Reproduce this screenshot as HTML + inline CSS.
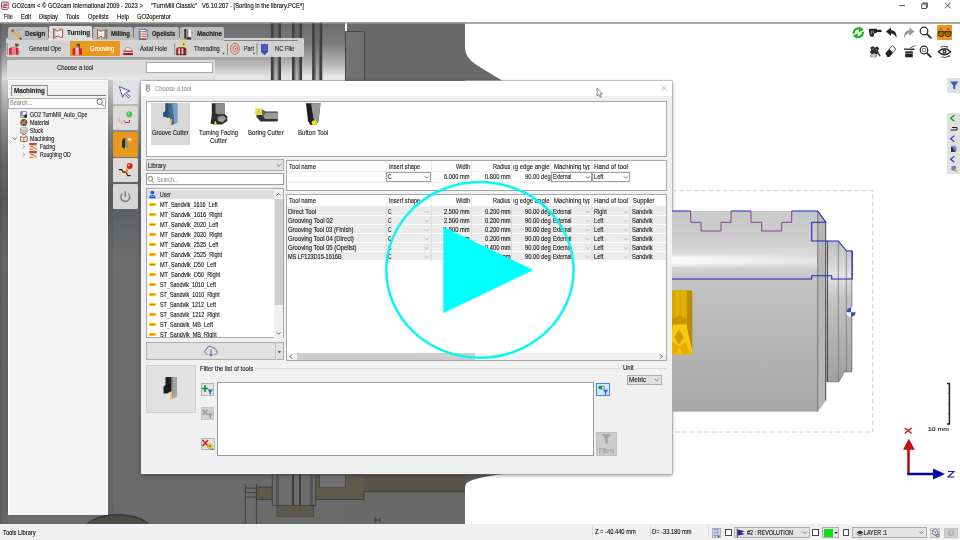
<!DOCTYPE html>
<html><head><meta charset="utf-8">
<style>
*{box-sizing:border-box;margin:0;padding:0}
html,body{width:960px;height:540px;overflow:hidden;background:#fff}
body{font-family:"Liberation Sans",sans-serif;font-size:6.5px;color:#1e1e1e;position:relative}
.a{position:absolute}
.t{position:absolute;white-space:nowrap;transform-origin:0 50%;display:block;-webkit-text-stroke:.13px currentColor}
svg{position:absolute;overflow:visible}
</style></head><body><div id="root" style="position:absolute;left:0;top:0;width:960px;height:540px;will-change:transform">
<!-- sec_bg -->
<div class="a" style="left:0.00px;top:0.00px;width:960.00px;height:22.00px;background:#fff;"></div>
<div class="a" style="left:0.00px;top:22.00px;width:960.00px;height:1.60px;background:#a8a8a8;"></div>
<svg style="left:0;top:0" width="960" height="540" viewBox="0 0 960 540">
<defs>
<linearGradient id="gTop" x1="0" y1="0" x2="0" y2="1"><stop offset="0" stop-color="#6a6a6a"/><stop offset="0.35" stop-color="#7c7c7c"/><stop offset="0.7" stop-color="#b4b4b4"/><stop offset="1" stop-color="#f2f2f2"/></linearGradient>
<linearGradient id="gStripe" x1="0" y1="0" x2="1" y2="0"><stop offset="0" stop-color="#3e3e3e"/><stop offset="0.3" stop-color="#5a5a5a"/><stop offset="0.55" stop-color="#7a7a7a"/><stop offset="0.8" stop-color="#555"/><stop offset="1" stop-color="#3a3a3a"/></linearGradient>
<linearGradient id="gLeft" x1="0" y1="0" x2="0" y2="1"><stop offset="0" stop-color="#e8e8e8"/><stop offset="0.034" stop-color="#cdcdcd"/><stop offset="0.08" stop-color="#a6a6a6"/><stop offset="0.124" stop-color="#888"/><stop offset="0.18" stop-color="#6e6e6e"/><stop offset="0.27" stop-color="#5c5e62"/><stop offset="0.31" stop-color="#606266"/><stop offset="0.4" stop-color="#6d6d6d"/><stop offset="1" stop-color="#6b6b6b"/></linearGradient>
</defs>
<!-- dark solid block top -->
<path d="M345 23.500H465V48Q465.500 58 476.500 65L502 80.500H345Z" fill="#6a6a6a"/>
<!-- gradient zone top-left -->
<rect x="0" y="23.500" width="345" height="57" fill="url(#gTop)"/>
<rect x="0" y="23.500" width="1.600" height="57" fill="#505050" opacity=".5"/><rect x="1.600" y="23.500" width="6" height="57" fill="#505050" opacity=".1"/>
<!-- vertical stripes -->
<rect x="270.9" y="23.5" width="10.1" height="57" fill="#555" opacity=".35"/><rect x="270.9" y="23.5" width="2.5" height="57" fill="#3e3e3e"/><rect x="278.5" y="23.5" width="2.5" height="57" fill="#3e3e3e"/><rect x="273.4" y="23.5" width=".8" height="57" fill="#5a5a5a"/><rect x="277.7" y="23.5" width=".8" height="57" fill="#5a5a5a"/>
<rect x="292.0" y="23.5" width="10.0" height="57" fill="#555" opacity=".35"/><rect x="292.0" y="23.5" width="2.5" height="57" fill="#3e3e3e"/><rect x="299.5" y="23.5" width="2.5" height="57" fill="#3e3e3e"/><rect x="294.5" y="23.5" width=".8" height="57" fill="#5a5a5a"/><rect x="298.7" y="23.5" width=".8" height="57" fill="#5a5a5a"/>
<rect x="312.2" y="23.5" width="10.0" height="57" fill="#555" opacity=".35"/><rect x="312.2" y="23.5" width="2.5" height="57" fill="#3e3e3e"/><rect x="319.7" y="23.5" width="2.5" height="57" fill="#3e3e3e"/><rect x="314.7" y="23.5" width=".8" height="57" fill="#5a5a5a"/><rect x="318.9" y="23.5" width=".8" height="57" fill="#5a5a5a"/>
<rect x="345" y="23.500" width="2" height="8" fill="#fff"/>
<rect x="345.300" y="31.700" width="19" height="49" fill="#727272" stroke="#2a2a2a" stroke-width=".6"/>
<!-- lower-left dark zone -->
<rect x="0" y="80" width="345" height="444" fill="url(#gLeft)"/>
<rect x="0" y="80" width="1.600" height="444" fill="#404040" opacity=".4"/><rect x="1.600" y="80" width="6" height="444" fill="#404040" opacity=".14"/>
<rect x="107.500" y="80" width="5.500" height="444" fill="#404040" opacity=".18"/>
<rect x="345" y="80" width="120" height="444" fill="#6a6a6a"/>
<!-- bottom machine bits (y 474..524) -->
<path d="M465 474H502Q478 477 468 482Q465 484 465 487Z" fill="#5a5a5a"/>
<rect x="364" y="474" width="101" height="17.700" fill="#59554a"/>
<rect x="315.800" y="474" width="48.200" height="25.600" fill="#5d594b"/>
<rect x="319.700" y="474" width="25.700" height="13.700" fill="#727272" stroke="#333" stroke-width=".5"/>
<rect x="256.400" y="487" width="20" height="12.600" fill="#5d594b"/>
<rect x="272.200" y="474" width="43.600" height="31.500" fill="#6c6c6c" stroke="#2a2a2a" stroke-width=".6"/>
<rect x="276" y="474" width="3" height="31.500" fill="#555"/><rect x="292" y="474" width="2" height="31.500" fill="#3c3c3c"/><rect x="299" y="474" width="2" height="31.500" fill="#3c3c3c"/><rect x="310" y="474" width="3" height="31.500" fill="#555"/>
<rect x="277" y="505.500" width="36.800" height="10.700" fill="#5d594b" stroke="#333" stroke-width=".5"/>
<path d="M245.300 483.800V524M256.400 483.800V524M245.300 488H256.400M245.300 492.500H256.400M245.300 497H256.400" stroke="#222" stroke-width=".6" fill="none"/>
<path d="M256.400 487H272.200M256.400 499.600H272.200M315.800 499.600H364V491.700H465" stroke="#2a2a2a" stroke-width=".6" fill="none"/>
<path d="M375 517V523M380 517V523M375 520H380" stroke="#222" stroke-width=".6" fill="none"/>
<ellipse cx="118" cy="531" rx="34" ry="16.300" fill="#4c4c42" stroke="#1a1a1a" stroke-width=".8"/>
</svg>
<!-- sec_top -->
<svg style="left:0;top:0" width="12" height="11" viewBox="0 0 12 11">
<rect x="1.600" y="2" width="6.600" height="7.400" rx="1" fill="#f6e8ee" stroke="#b0385a" stroke-width="1"/>
<path d="M3.200 4.200H6.600V5.700H3.300V7.500H6.700" fill="none" stroke="#8a2848" stroke-width=".9"/></svg>
<span class="t" style="left:11.70px;top:1.87px;font-size:6.50px;line-height:7.80px;color:#111;transform:scaleX(0.8977);">GO2cam &lt; © GO2cam International 2009 - 2023 &gt;</span>
<span class="t" style="left:150.70px;top:1.87px;font-size:6.50px;line-height:7.80px;color:#111;transform:scaleX(0.9156);">"TurnMill Classic"</span>
<span class="t" style="left:201.70px;top:1.87px;font-size:6.50px;line-height:7.80px;color:#111;transform:scaleX(0.8926);">V6.10.207 - [Sorting in the library.PCE*]</span>
<svg style="left:890px;top:0" width="70" height="11" viewBox="890 0 70 11">
<path d="M899.300 5.600H905" stroke="#222" stroke-width=".8"/>
<rect x="921.800" y="4" width="4.400" height="4.400" fill="none" stroke="#222" stroke-width=".8"/><path d="M923 4V2.900H927.400V7.300H926.300" fill="none" stroke="#222" stroke-width=".8"/>
<path d="M945 2.800L950.600 8.400M950.600 2.800L945 8.400" stroke="#222" stroke-width=".8"/></svg>
<span class="t" style="left:3.70px;top:12.87px;font-size:6.50px;line-height:7.80px;color:#111;transform:scaleX(0.8402);">File</span>
<span class="t" style="left:20.80px;top:12.87px;font-size:6.50px;line-height:7.80px;color:#111;transform:scaleX(0.8928);">Edit</span>
<span class="t" style="left:38.80px;top:12.87px;font-size:6.50px;line-height:7.80px;color:#111;transform:scaleX(0.8915);">Display</span>
<span class="t" style="left:66.20px;top:12.87px;font-size:6.50px;line-height:7.80px;color:#111;transform:scaleX(0.8567);">Tools</span>
<span class="t" style="left:87.80px;top:12.87px;font-size:6.50px;line-height:7.80px;color:#111;transform:scaleX(0.8731);">Opelists</span>
<span class="t" style="left:116.70px;top:12.87px;font-size:6.50px;line-height:7.80px;color:#111;transform:scaleX(0.9051);">Help</span>
<span class="t" style="left:137.00px;top:12.87px;font-size:6.50px;line-height:7.80px;color:#111;transform:scaleX(0.8909);">GO2operator</span>
<div class="a" style="left:6.00px;top:38.20px;width:298.30px;height:18.50px;background:rgba(216,216,216,.94);border-radius:1.5px 2px 2px 2px;"></div>
<div class="a" style="left:224.00px;top:39.90px;width:74.30px;height:0.80px;background:#808080;"></div>
<div class="a" style="left:8.00px;top:27.30px;width:40.00px;height:13.20px;background:#bcbcbc;border-radius:2px 2px 0 0;"></div>
<span class="t" style="left:25.00px;top:30.25px;font-size:6.70px;line-height:8.04px;color:#1a1a1a;font-weight:bold;transform:scaleX(0.9088);">Design</span>
<div class="a" style="left:49.00px;top:26.30px;width:43.30px;height:14.70px;background:#dedede;border-radius:2px 2px 0 0;box-shadow:0 0 .5px #fff inset;"></div>
<span class="t" style="left:66.70px;top:29.45px;font-size:6.70px;line-height:8.04px;color:#1a1a1a;font-weight:bold;transform:scaleX(0.9535);">Turning</span>
<div class="a" style="left:93.00px;top:27.30px;width:40.00px;height:13.20px;background:#bcbcbc;border-radius:2px 2px 0 0;"></div>
<span class="t" style="left:111.20px;top:30.25px;font-size:6.70px;line-height:8.04px;color:#1a1a1a;font-weight:bold;transform:scaleX(0.8863);">Milling</span>
<div class="a" style="left:134.00px;top:27.30px;width:45.00px;height:13.20px;background:#bcbcbc;border-radius:2px 2px 0 0;"></div>
<span class="t" style="left:151.70px;top:30.25px;font-size:6.70px;line-height:8.04px;color:#1a1a1a;font-weight:bold;transform:scaleX(0.8813);">Opelists</span>
<div class="a" style="left:180.00px;top:27.30px;width:43.50px;height:13.20px;background:#bcbcbc;border-radius:2px 2px 0 0;"></div>
<span class="t" style="left:196.70px;top:30.25px;font-size:6.70px;line-height:8.04px;color:#1a1a1a;font-weight:bold;transform:scaleX(0.9326);">Machine</span>
<svg style="left:0;top:24px" width="230" height="18" viewBox="0 24 230 18">
<path d="M12.500 30.500L20.500 38.500" stroke="#e8b030" stroke-width="2.400"/><path d="M12 30L13.500 31.500" stroke="#d04040" stroke-width="2.600"/><path d="M19.800 37.800L21.500 39.500" stroke="#333" stroke-width="1.200"/><path d="M16 31L21 29.500" stroke="#c09080" stroke-width=".8"/>
<path d="M53.600 28.600L57.300 31.300L60 29.800H62.600V37.200H60L57.300 35.800L53.600 38.800Z" fill="#f6efe6" stroke="#8a4a32" stroke-width=".9" stroke-linejoin="round"/><path d="M54.800 29.500V37.800" stroke="#8a4a32" stroke-width=".6"/><path d="M59 28.600L61.500 27.800L62.500 29.200" stroke="#d8c860" stroke-width="1" fill="none"/>
<path d="M97.600 29.200L101 31.500L103.600 30H105V38H103.600L101 36.200L97.600 38.800Z" fill="#f6efe6" stroke="#8a4a32" stroke-width=".9" stroke-linejoin="round"/><path d="M106.300 29V39" stroke="#555" stroke-width="1.300" stroke-dasharray="1.400 .8"/><path d="M107.600 30V38" stroke="#888" stroke-width=".6"/>
<rect x="139.300" y="29.300" width="7.800" height="10.200" rx=".8" fill="#fbfbff" stroke="#3a3aa0" stroke-width=".8"/><path d="M141.800 31.800H146M141.800 34H146M141.800 36.200H146M141.800 38.300H146" stroke="#e03818" stroke-width="1.100"/><path d="M140.700 31.200V39" stroke="#181830" stroke-width="1" stroke-dasharray="1.100 1.100"/><path d="M145 29.300L147.100 31.500" stroke="#3a3aa0" stroke-width=".8"/>
<rect x="184.200" y="29" width="2.200" height="10" fill="#383838"/><rect x="186.400" y="29.500" width="2.100" height="9.500" fill="#8c8c8c"/><rect x="188.600" y="29.500" width="2.500" height="7.800" fill="#f4f4f4"/><rect x="191.100" y="31.500" width="1.800" height="2.800" fill="#a0a0a0"/><rect x="186.400" y="37.300" width="4.700" height="2.200" fill="#2a2a2a"/><rect x="183.700" y="38.400" width="2.700" height="1.800" fill="#e8a020"/>
</svg>
<div class="a" style="left:69.70px;top:41.20px;width:50.30px;height:15.30px;background:#e8981c;"></div>
<span class="t" style="left:28.70px;top:44.97px;font-size:6.50px;line-height:7.80px;color:#222;transform:scaleX(0.8625);">General Ope</span>
<span class="t" style="left:90.00px;top:45.27px;font-size:6.50px;line-height:7.80px;color:#fff;transform:scaleX(0.9175);">Grooving</span>
<span class="t" style="left:140.00px;top:44.97px;font-size:6.50px;line-height:7.80px;color:#222;transform:scaleX(0.9329);">Axial Hole</span>
<span class="t" style="left:194.20px;top:44.97px;font-size:6.50px;line-height:7.80px;color:#222;transform:scaleX(0.8814);">Threading</span>
<span class="t" style="left:243.80px;top:44.97px;font-size:6.50px;line-height:7.80px;color:#222;transform:scaleX(0.8304);">Part</span>
<span class="t" style="left:275.00px;top:44.97px;font-size:6.50px;line-height:7.80px;color:#222;transform:scaleX(0.8861);">NC File</span>
<svg style="left:0;top:40px" width="310" height="18" viewBox="0 40 310 18">
<path d="M7.300 43V55M174.700 43.500V55M227.500 43.500V55M257 43.500V55" stroke="#666" stroke-width=".7"/>
<path d="M222 52.800H225L223.500 54.500ZM252.500 52.800H255.500L254 54.500Z" fill="#555"/>
<!-- general ope -->
<path d="M9 48.500L11.500 47H16L18.500 48.500V54.800H9Z" fill="#d42030"/><rect x="11.600" y="47" width="4.400" height="7.800" fill="#f08088"/><rect x="15.300" y="43.300" width="3" height="3.200" fill="#444"/><rect x="16.300" y="43" width="1.600" height="1.200" fill="#e8b020"/>
<!-- grooving -->
<path d="M72.500 49L75 47.500H79.500L82 49V54.800H72.500Z" fill="#d42030"/><rect x="75.500" y="47.500" width="3.200" height="7.300" fill="#f6d0d0"/><rect x="76.500" y="43.800" width="3.500" height="2.600" fill="#555"/><rect x="78.800" y="45" width="1" height="3.500" fill="#444"/>
<!-- axial hole -->
<path d="M123.300 50.800H133V54.800H123.300Z" fill="#c81828"/><path d="M123.300 52.300H133" stroke="#fbeaea" stroke-width="1"/><path d="M123.300 54.600H133" stroke="#4a1010" stroke-width=".7"/><path d="M124.300 50.800L126.500 47.300L130 48.300L132 50.800Z" fill="#f8f0ec" stroke="#7a4040" stroke-width=".5"/>
<!-- threading -->
<path d="M176.300 48.500L178.300 47.300H184.300L186.300 48.500V54.800H176.300Z" fill="#8a1c22"/><rect x="178.300" y="48.300" width="1.700" height="6.300" fill="#f6e0e0"/><rect x="181.500" y="48.300" width="1.800" height="6.300" fill="#f0c4c4"/><path d="M176.300 54.700H186.300" stroke="#2a0808" stroke-width=".7"/><ellipse cx="183" cy="44.300" rx="2.500" ry="1.900" fill="#e4e428"/><circle cx="183.800" cy="44.300" r=".7" fill="#222"/>
<!-- part -->
<ellipse cx="235" cy="48.800" rx="4.400" ry="5.600" fill="#e8c8b8" stroke="#a06040" stroke-width=".8"/><ellipse cx="235.300" cy="48.800" rx="2.300" ry="3.200" fill="none" stroke="#a06040" stroke-width=".7"/><circle cx="235.500" cy="48.800" r=".8" fill="#a06040"/>
<!-- nc file -->
<path d="M261 43.500L262.800 44.500L264.500 43.500L266.200 44.500L268 43.500V52L264.500 55L261 52Z" fill="#3c50b8"/><path d="M262.500 47H266.500M262.500 49.500H266.500" stroke="#a8b4ee" stroke-width=".7" stroke-dasharray=".8 .6"/>
</svg>
<div class="a" style="left:7.00px;top:60.00px;width:208.00px;height:20.00px;background:linear-gradient(#dcdcdc,#dedede 60%,#e9e9e9);border-radius:1.500px 1.500px 0 0;"></div>
<span class="t" style="left:56.70px;top:63.97px;font-size:6.50px;line-height:7.80px;color:#222;transform:scaleX(0.9050);">Choose a tool</span>
<div class="a" style="left:146.00px;top:62.30px;width:67.30px;height:10.30px;background:#fff;border:0.8px solid #a8a8a8;"></div>
<!-- sec_left -->
<div class="a" style="left:7.50px;top:79.70px;width:100.00px;height:435.60px;background:#f1f1f1;border:1px solid #fdfdfd;box-shadow:0 0 1px rgba(0,0,0,.35);"></div>
<div class="a" style="left:47.50px;top:95.30px;width:58.80px;height:0.90px;background:#7a7a7a;"></div>
<div class="a" style="left:11.30px;top:85.30px;width:36.70px;height:10.90px;background:#e9e9e9;border:0.8px solid #8a8a8a;border-bottom:none;border-radius:1.500px 1.500px 0 0;"></div>
<span class="t" style="left:14.20px;top:86.65px;font-size:6.70px;line-height:8.04px;color:#1a1a1a;font-weight:bold;transform:scaleX(0.9297);">Machining</span>
<div class="a" style="left:8.30px;top:97.50px;width:98.00px;height:11.00px;background:#fff;border:0.8px solid #adadad;"></div>
<span class="t" style="left:9.70px;top:99.29px;font-size:6.30px;line-height:7.56px;color:#8e8e8e;transform:scaleX(0.8845);">Search...</span>
<svg style="left:94px;top:97px" width="13" height="12" viewBox="94 97 13 12"><circle cx="99.700" cy="101.800" r="2.700" fill="none" stroke="#555" stroke-width=".8"/><path d="M101.700 103.900L104.300 106.600" stroke="#555" stroke-width=".9"/></svg>
<div class="a" style="left:8.50px;top:109.00px;width:98.00px;height:405.50px;background:#f3f3f3;"></div>
<span class="t" style="left:30.00px;top:110.63px;font-size:6.40px;line-height:7.68px;color:#1a1a1a;transform:scaleX(0.8205);">GO2 TurnMill_Auto_Ope</span>
<span class="t" style="left:30.00px;top:118.63px;font-size:6.40px;line-height:7.68px;color:#1a1a1a;transform:scaleX(0.8435);">Material</span>
<span class="t" style="left:30.00px;top:126.53px;font-size:6.40px;line-height:7.68px;color:#1a1a1a;transform:scaleX(0.8122);">Stock</span>
<span class="t" style="left:30.00px;top:134.53px;font-size:6.40px;line-height:7.68px;color:#1a1a1a;transform:scaleX(0.8295);">Machining</span>
<span class="t" style="left:40.00px;top:142.53px;font-size:6.40px;line-height:7.68px;color:#1a1a1a;transform:scaleX(0.7808);">Facing</span>
<span class="t" style="left:40.00px;top:150.63px;font-size:6.40px;line-height:7.68px;color:#1a1a1a;transform:scaleX(0.7942);">Roughing OD</span>
<svg style="left:8px;top:109px" width="40" height="52" viewBox="8 109 40 52">
<rect x="20.300" y="111.300" width="6.500" height="6.500" rx=".8" fill="#6a78c8"/><rect x="22.500" y="112" width="3.500" height="3" fill="#f0f0f0"/><rect x="21" y="115.500" width="2.500" height="2" fill="#e8d040"/><rect x="24.500" y="114.500" width="2.300" height="3.300" fill="#222"/>
<circle cx="23.800" cy="122.600" r="3.500" fill="#555"/><path d="M21 121.500L26.500 124M21.500 124.500L25.500 120.500" stroke="#f08020" stroke-width="1.300"/>
<rect x="20.300" y="127.500" width="7" height="6.300" rx="2" fill="#bdbdbd" stroke="#8a8a8a" stroke-width=".6"/><ellipse cx="23.800" cy="128.800" rx="3" ry="1.200" fill="#d8d8d8"/>
<path d="M12.600 137.500L14.700 139.600L16.800 137.500" fill="none" stroke="#444" stroke-width=".8"/>
<path d="M20.500 136.500L23.800 137.500L27.200 136.500V141L23.800 142L20.500 141Z" fill="#f2ead8" stroke="#6a4020" stroke-width=".7"/><path d="M23.800 137.500V142" stroke="#6a4020" stroke-width=".6"/><path d="M22.500 135.500L24 134.200L25.500 135.500" stroke="#c03020" stroke-width=".8" fill="none"/>
<path d="M22.700 144.700L24.700 146.500L22.700 148.300" fill="none" stroke="#777" stroke-width=".7"/>
<path d="M22.700 152.800L24.700 154.600L22.700 156.400" fill="none" stroke="#777" stroke-width=".7"/>
<rect x="29.300" y="143" width="7.400" height="7" fill="#f4e8d8"/><rect x="29.300" y="143" width="7.400" height="2.200" fill="#e03028"/><path d="M30.500 146.500H33L35.500 149H36.500" stroke="#803018" stroke-width=".8" fill="none"/><rect x="29.300" y="148.500" width="4" height="1.500" fill="#e8a020"/>
<rect x="29.300" y="151" width="7.400" height="7" fill="#f4e8d8"/><rect x="29.300" y="151" width="7.400" height="2.200" fill="#e03028"/><path d="M30.500 154.500H33L35.500 157H36.500" stroke="#803018" stroke-width=".8" fill="none"/><rect x="29.300" y="156.500" width="4" height="1.500" fill="#e8a020"/>
</svg>
<div class="a" style="left:112.70px;top:80.30px;width:25.30px;height:23.90px;background:#e2e2e2;border-radius:1.200px;"></div>
<div class="a" style="left:112.70px;top:105.80px;width:25.30px;height:24.50px;background:#dcdcdc;border-radius:1.200px;"></div>
<div class="a" style="left:112.70px;top:132.00px;width:25.30px;height:24.80px;background:#e8981c;border-radius:1.200px;"></div>
<div class="a" style="left:112.70px;top:158.20px;width:25.30px;height:24.30px;background:#dcdcdc;border-radius:1.200px;"></div>
<div class="a" style="left:112.70px;top:184.20px;width:25.30px;height:24.50px;background:#d6d6d6;border-radius:1.200px;"></div>
<svg style="left:112px;top:80px" width="27" height="130" viewBox="112 80 27 130">
<path d="M119.300 86.600L130 91L125.800 92.400L129.800 96.500L128.300 97.800L124.500 93.600L122.600 97.300Z" fill="#fff" stroke="#3a44b0" stroke-width=".9" stroke-linejoin="round"/>
<circle cx="129.300" cy="114.300" r="3" fill="#38c838"/><circle cx="128.500" cy="113.500" r="1" fill="#a8f0a8"/><path d="M119 117V121.500H122V123.500H126" stroke="#d8c4b4" stroke-width="2" fill="none"/><path d="M124 120.500L125.500 122.500H129.500V120" stroke="#e02020" stroke-width="1" fill="none"/>
<path d="M122 141L123.500 138.300H125.300V148.300H123.300L122 146.500Z" fill="#2e2e2e"/><path d="M125.300 138.300H127.600V148.800L125.300 148.300Z" fill="#8c8c8c"/><path d="M125 147L126.300 146.300L126.300 149.600L125.200 149.900Z" fill="#e8c020"/><circle cx="129.700" cy="140.300" r="3" fill="#f6a030"/><ellipse cx="129.500" cy="139.400" rx="1.800" ry="1.100" fill="#fdebd0"/>
<path d="M119 170.800H121.300L122.800 173.300H125.800L127.300 176.600H119Z" fill="#f2d4b4"/><path d="M118.800 169.600H121.700L123.200 172.100H126.200L127.700 175.600H130.600" stroke="#1a1a1a" stroke-width="1.100" fill="none"/><path d="M128.800 167.500L126.300 171.800" stroke="#f6b020" stroke-width="2.200"/><path d="M127.300 170L126 172.300" stroke="#f07010" stroke-width="1.600"/><circle cx="129.700" cy="166" r="3" fill="#e02020"/><circle cx="128.900" cy="165.100" r="1.100" fill="#f8a8a8"/>
<path d="M122.300 193.600A4.500 4.500 0 1 0 128.300 193.600" fill="none" stroke="#848484" stroke-width="1.600"/><path d="M125.300 191.200V197" stroke="#848484" stroke-width="1.600"/>
</svg>
<!-- sec_dlg -->
<div class="a" style="left:140.50px;top:80.90px;width:531.80px;height:392.80px;background:#f0f0f0;box-shadow:0 0 0 .6px rgba(120,120,120,.55),0 1px 4px rgba(0,0,0,.45);"></div>
<div class="a" style="left:140.50px;top:80.90px;width:531.80px;height:15.00px;background:#fff;"></div>
<svg style="left:144px;top:82px" width="8" height="12" viewBox="144 82 8 12"><path d="M146.300 84.300V90.300L147.700 92L149.200 90.300V84.300" fill="#f4f0e0" stroke="#555" stroke-width=".7"/><path d="M147.700 84.300V89" stroke="#777" stroke-width=".5"/></svg>
<span class="t" style="left:155.00px;top:85.27px;font-size:6.50px;line-height:7.80px;color:#9a9a9a;transform:scaleX(0.9050);">Choose a tool</span>
<svg style="left:660px;top:84px" width="8" height="8" viewBox="660 84 8 8"><path d="M661.800 85.800L666.600 90.600M666.600 85.800L661.800 90.600" stroke="#9a9a9a" stroke-width=".7"/></svg>
<div class="a" style="left:146.30px;top:100.80px;width:520.70px;height:55.90px;background:#fff;border:0.8px solid #a8a8a8;"></div>
<div class="a" style="left:150.50px;top:102.50px;width:39.80px;height:42.10px;background:#d9d9d9;"></div>
<span class="t" style="left:152.00px;top:128.67px;font-size:6.50px;line-height:7.80px;color:#1e1e1e;transform:scaleX(0.9015);">Groove Cutter</span>
<span class="t" style="left:199.20px;top:128.67px;font-size:6.50px;line-height:7.80px;color:#1e1e1e;transform:scaleX(0.9069);">Turning Facing</span>
<span class="t" style="left:210.00px;top:137.27px;font-size:6.50px;line-height:7.80px;color:#1e1e1e;transform:scaleX(0.9604);">Cutter</span>
<span class="t" style="left:248.00px;top:128.67px;font-size:6.50px;line-height:7.80px;color:#1e1e1e;transform:scaleX(0.9322);">Boring Cutter</span>
<span class="t" style="left:298.00px;top:128.67px;font-size:6.50px;line-height:7.80px;color:#1e1e1e;transform:scaleX(0.9350);">Button Tool</span>
<svg style="left:150px;top:101px" width="180" height="28" viewBox="150 101 180 28">
<!-- groove cutter -->
<path d="M165.500 103.300H177.300V122.500L172.500 125H170V118L163.300 116.500V112.500L165.500 111Z" fill="#456a94"/><path d="M165.500 103.300H168.500V118L163.300 116.500V112.500L165.500 111Z" fill="#2d4f7c"/><path d="M172 103.300H177.300V122.500L174 124V118Z" fill="#7b9dc2"/><path d="M170.200 119.500L172 118.500L171.300 125L169.800 125.500Z" fill="#e8d020"/>
<!-- turning facing -->
<path d="M211.800 103.300H224.500V114L227.300 116.500V121L222 124.500H214L210.500 123.500L211.800 115Z" fill="#2a2a2a"/><path d="M215.500 103.300H224.500V114L220 114.500L215.500 113.500Z" fill="#8e8e8e"/><path d="M217.500 117L223.500 115.500L226.500 118.500L222.500 122.500L218 121Z" fill="#9a9a9a" stroke="#555" stroke-width=".5"/><path d="M213.800 124.500L215.300 120.500L217 124.500Z" fill="#f0e020"/>
<!-- boring -->
<rect x="255.300" y="108.500" width="6.700" height="6.500" fill="#e8d830"/><circle cx="258.500" cy="111.800" r="1" fill="#b0a8c8"/><path d="M262 109.500L265.500 111.500H277.800V121.500H260.500L256.500 117V115H262Z" fill="#333"/><path d="M266 112.500H277.800V119H265L263 115.500Z" fill="#9a9a9a"/><path d="M262 109.500L265.500 111.500L263.500 116H262Z" fill="#666"/>
<!-- button tool -->
<path d="M306 103.300H320.500L318.500 121L316 125H310.500L308 121Z" fill="#1e1e1e"/><path d="M311 103.300H320.500L318.500 121L316.500 122.500L313.500 119Z" fill="#9a9a9a"/><circle cx="314.300" cy="122.800" r="2.600" fill="#f0e020"/>
</svg>
<div class="a" style="left:146.30px;top:159.20px;width:137.70px;height:11.40px;background:#e1e1e1;border:0.8px solid #adadad;"></div>
<span class="t" style="left:148.00px;top:162.07px;font-size:6.50px;line-height:7.80px;color:#1e1e1e;transform:scaleX(0.8959);">Library</span>
<svg style="left:274px;top:161px" width="10" height="8" viewBox="274 161 10 8"><path d="M276.800 164L279 166.200L281.200 164" fill="none" stroke="#555" stroke-width=".7"/></svg>
<div class="a" style="left:146.30px;top:173.30px;width:137.70px;height:12.10px;background:#fff;border:0.8px solid #9c9c9c;"></div>
<svg style="left:146px;top:174px" width="10" height="11" viewBox="146 174 10 11"><circle cx="150.300" cy="178.700" r="2.400" fill="none" stroke="#555" stroke-width=".7"/><path d="M152 180.600L154 182.800" stroke="#555" stroke-width=".8"/></svg>
<span class="t" style="left:156.70px;top:175.89px;font-size:6.30px;line-height:7.56px;color:#9a9a9a;transform:scaleX(0.8448);">Search...</span>
<div class="a" style="left:146.30px;top:188.30px;width:137.70px;height:150.20px;background:#fff;border:0.8px solid #a8a8a8;overflow:hidden;"></div>
<div class="a" style="left:147.20px;top:189.70px;width:126.60px;height:9.60px;background:#dcdcdc;"></div>
<svg style="left:148px;top:190px" width="9" height="9" viewBox="148 190 9 9"><circle cx="152.400" cy="192.600" r="1.900" fill="#2858c8"/><path d="M149.200 198.300Q149.200 195 152.400 195Q155.600 195 155.600 198.300Z" fill="#2858c8"/><path d="M150.800 196.300H154" stroke="#fff" stroke-width=".5"/></svg>
<span class="t" style="left:160.00px;top:191.33px;font-size:6.40px;line-height:7.68px;color:#1e1e1e;transform:scaleX(0.7992);">User</span>
<div class="a" style="left:148.80px;top:203.10px;width:7.10px;height:3.30px;background:#ffd200;border-radius:.4px;"></div>
<div class="a" style="left:150.20px;top:204.15px;width:4.70px;height:1.20px;background:#f07000;"></div>
<span class="t" style="left:159.50px;top:200.83px;font-size:6.40px;line-height:7.68px;color:#1a1a1a;transform:scaleX(0.8550);clip-path:inset(0 0 0.0px 0);">MT_Sandvik_1616_Left</span>
<div class="a" style="left:148.80px;top:213.10px;width:7.10px;height:3.30px;background:#ffd200;border-radius:.4px;"></div>
<div class="a" style="left:150.20px;top:214.15px;width:4.70px;height:1.20px;background:#f07000;"></div>
<span class="t" style="left:159.50px;top:210.83px;font-size:6.40px;line-height:7.68px;color:#1a1a1a;transform:scaleX(0.8655);clip-path:inset(0 0 0.0px 0);">MT_Sandvik_1616_Right</span>
<div class="a" style="left:148.80px;top:223.10px;width:7.10px;height:3.30px;background:#ffd200;border-radius:.4px;"></div>
<div class="a" style="left:150.20px;top:224.15px;width:4.70px;height:1.20px;background:#f07000;"></div>
<span class="t" style="left:159.50px;top:220.83px;font-size:6.40px;line-height:7.68px;color:#1a1a1a;transform:scaleX(0.8639);clip-path:inset(0 0 0.0px 0);">MT_Sandvik_2020_Left</span>
<div class="a" style="left:148.80px;top:233.10px;width:7.10px;height:3.30px;background:#ffd200;border-radius:.4px;"></div>
<div class="a" style="left:150.20px;top:234.15px;width:4.70px;height:1.20px;background:#f07000;"></div>
<span class="t" style="left:159.50px;top:230.83px;font-size:6.40px;line-height:7.68px;color:#1a1a1a;transform:scaleX(0.8655);clip-path:inset(0 0 0.0px 0);">MT_Sandvik_2020_Right</span>
<div class="a" style="left:148.80px;top:243.10px;width:7.10px;height:3.30px;background:#ffd200;border-radius:.4px;"></div>
<div class="a" style="left:150.20px;top:244.15px;width:4.70px;height:1.20px;background:#f07000;"></div>
<span class="t" style="left:159.50px;top:240.83px;font-size:6.40px;line-height:7.68px;color:#1a1a1a;transform:scaleX(0.8639);clip-path:inset(0 0 0.0px 0);">MT_Sandvik_2525_Left</span>
<div class="a" style="left:148.80px;top:253.10px;width:7.10px;height:3.30px;background:#ffd200;border-radius:.4px;"></div>
<div class="a" style="left:150.20px;top:254.15px;width:4.70px;height:1.20px;background:#f07000;"></div>
<span class="t" style="left:159.50px;top:250.83px;font-size:6.40px;line-height:7.68px;color:#1a1a1a;transform:scaleX(0.8655);clip-path:inset(0 0 0.0px 0);">MT_Sandvik_2525_Right</span>
<div class="a" style="left:148.80px;top:263.10px;width:7.10px;height:3.30px;background:#ffd200;border-radius:.4px;"></div>
<div class="a" style="left:150.20px;top:264.15px;width:4.70px;height:1.20px;background:#f07000;"></div>
<span class="t" style="left:159.50px;top:260.83px;font-size:6.40px;line-height:7.68px;color:#1a1a1a;transform:scaleX(0.8663);clip-path:inset(0 0 0.0px 0);">MT_Sandvik_D50_Left</span>
<div class="a" style="left:148.80px;top:273.10px;width:7.10px;height:3.30px;background:#ffd200;border-radius:.4px;"></div>
<div class="a" style="left:150.20px;top:274.15px;width:4.70px;height:1.20px;background:#f07000;"></div>
<span class="t" style="left:159.50px;top:270.83px;font-size:6.40px;line-height:7.68px;color:#1a1a1a;transform:scaleX(0.8678);clip-path:inset(0 0 0.0px 0);">MT_Sandvik_D50_Right</span>
<div class="a" style="left:148.80px;top:283.10px;width:7.10px;height:3.30px;background:#ffd200;border-radius:.4px;"></div>
<div class="a" style="left:150.20px;top:284.15px;width:4.70px;height:1.20px;background:#f07000;"></div>
<span class="t" style="left:159.50px;top:280.83px;font-size:6.40px;line-height:7.68px;color:#1a1a1a;transform:scaleX(0.8431);clip-path:inset(0 0 0.0px 0);">ST_Sandvik_1010_Left</span>
<div class="a" style="left:148.80px;top:293.10px;width:7.10px;height:3.30px;background:#ffd200;border-radius:.4px;"></div>
<div class="a" style="left:150.20px;top:294.15px;width:4.70px;height:1.20px;background:#f07000;"></div>
<span class="t" style="left:159.50px;top:290.83px;font-size:6.40px;line-height:7.68px;color:#1a1a1a;transform:scaleX(0.8460);clip-path:inset(0 0 0.0px 0);">ST_Sandvik_1010_Right</span>
<div class="a" style="left:148.80px;top:303.10px;width:7.10px;height:3.30px;background:#ffd200;border-radius:.4px;"></div>
<div class="a" style="left:150.20px;top:304.15px;width:4.70px;height:1.20px;background:#f07000;"></div>
<span class="t" style="left:159.50px;top:300.83px;font-size:6.40px;line-height:7.68px;color:#1a1a1a;transform:scaleX(0.8431);clip-path:inset(0 0 0.0px 0);">ST_Sandvik_1212_Left</span>
<div class="a" style="left:148.80px;top:313.10px;width:7.10px;height:3.30px;background:#ffd200;border-radius:.4px;"></div>
<div class="a" style="left:150.20px;top:314.15px;width:4.70px;height:1.20px;background:#f07000;"></div>
<span class="t" style="left:159.50px;top:310.83px;font-size:6.40px;line-height:7.68px;color:#1a1a1a;transform:scaleX(0.8460);clip-path:inset(0 0 0.0px 0);">ST_Sandvik_1212_Right</span>
<div class="a" style="left:148.80px;top:323.10px;width:7.10px;height:3.30px;background:#ffd200;border-radius:.4px;"></div>
<div class="a" style="left:150.20px;top:324.15px;width:4.70px;height:1.20px;background:#f07000;"></div>
<span class="t" style="left:159.50px;top:320.83px;font-size:6.40px;line-height:7.68px;color:#1a1a1a;transform:scaleX(0.8578);clip-path:inset(0 0 0.0px 0);">ST_Sandvik_MB_Left</span>
<div class="a" style="left:148.80px;top:333.10px;width:7.10px;height:3.30px;background:#ffd200;border-radius:.4px;"></div>
<div class="a" style="left:150.20px;top:334.15px;width:4.70px;height:1.20px;background:#f07000;"></div>
<span class="t" style="left:159.50px;top:330.83px;font-size:6.40px;line-height:7.68px;color:#1a1a1a;transform:scaleX(0.8599);clip-path:inset(0 0 0.6px 0);">ST_Sandvik_MB_Right</span>
<div class="a" style="left:273.80px;top:189.10px;width:9.40px;height:148.60px;background:#f0f0f0;"></div>
<div class="a" style="left:274.50px;top:199.30px;width:8.20px;height:105.70px;background:#cdcdcd;"></div>
<svg style="left:273px;top:189px" width="11" height="150" viewBox="273 189 11 150"><path d="M276.500 195.500L278.600 193.400L280.700 195.500" fill="none" stroke="#444" stroke-width=".8"/><path d="M276.500 332.300L278.600 334.400L280.700 332.300" fill="none" stroke="#444" stroke-width=".8"/></svg>
<div class="a" style="left:146.30px;top:342.30px;width:137.70px;height:17.90px;background:#e1e1e1;border:0.8px solid #adadad;"></div>
<div class="a" style="left:274.80px;top:342.70px;width:0.60px;height:17.10px;background:#c4c4c4;"></div>
<svg style="left:200px;top:343px" width="90" height="17" viewBox="200 343 90 17">
<path d="M207.500 354.300H206.800A2.600 2.600 0 0 1 206.600 349.300A3.300 3.300 0 0 1 212.800 348A2.500 2.500 0 0 1 216 350.300A2.100 2.100 0 0 1 215.500 354.300H214.500" fill="none" stroke="#3848b8" stroke-width=".8"/>
<path d="M211 349.500V356M209 354.200L211 356.300L213 354.200" fill="none" stroke="#3848b8" stroke-width=".9"/>
<path d="M277.700 351.200H281L279.350 353Z" fill="#222"/></svg>
<!-- sec_dlg2 -->
<div class="a" style="left:286.00px;top:159.50px;width:381.00px;height:31.10px;background:#fff;border:0.8px solid #a8a8a8;"></div>
<div class="a" style="left:286.00px;top:194.20px;width:381.00px;height:166.80px;background:#fff;border:0.8px solid #a8a8a8;"></div>
<span class="t" style="left:289.10px;top:162.69px;font-size:6.30px;line-height:7.56px;color:#1e1e1e;transform:scaleX(0.9254);">Tool name</span>
<span class="t" style="left:388.90px;top:162.69px;font-size:6.30px;line-height:7.56px;color:#1e1e1e;transform:scaleX(0.9027);">Insert shape</span>
<span class="t" style="left:455.83px;top:162.69px;font-size:6.30px;line-height:7.56px;color:#1e1e1e;transform:scaleX(0.8800);">Width</span>
<span class="t" style="left:493.04px;top:162.69px;font-size:6.30px;line-height:7.56px;color:#1e1e1e;transform:scaleX(0.8800);">Radius</span>
<span class="t" style="left:513.30px;top:162.69px;font-size:6.30px;line-height:7.56px;color:#1e1e1e;transform:scaleX(0.9559);">ıg edge angle</span>
<span class="t" style="left:553.50px;top:162.69px;font-size:6.30px;line-height:7.56px;color:#1e1e1e;transform:scaleX(0.9519);clip-path:inset(0 1.2px 0 0);">Machining typ</span>
<span class="t" style="left:594.30px;top:162.69px;font-size:6.30px;line-height:7.56px;color:#1e1e1e;transform:scaleX(1.0008);">Hand of tool</span>
<span class="t" style="left:289.10px;top:196.99px;font-size:6.30px;line-height:7.56px;color:#1e1e1e;transform:scaleX(0.9254);">Tool name</span>
<span class="t" style="left:388.90px;top:196.99px;font-size:6.30px;line-height:7.56px;color:#1e1e1e;transform:scaleX(0.9027);">Insert shape</span>
<span class="t" style="left:455.83px;top:196.99px;font-size:6.30px;line-height:7.56px;color:#1e1e1e;transform:scaleX(0.8800);">Width</span>
<span class="t" style="left:493.04px;top:196.99px;font-size:6.30px;line-height:7.56px;color:#1e1e1e;transform:scaleX(0.8800);">Radius</span>
<span class="t" style="left:513.30px;top:196.99px;font-size:6.30px;line-height:7.56px;color:#1e1e1e;transform:scaleX(0.9559);">ıg edge angle</span>
<span class="t" style="left:553.50px;top:196.99px;font-size:6.30px;line-height:7.56px;color:#1e1e1e;transform:scaleX(0.9519);clip-path:inset(0 1.2px 0 0);">Machining typ</span>
<span class="t" style="left:594.30px;top:196.99px;font-size:6.30px;line-height:7.56px;color:#1e1e1e;transform:scaleX(1.0008);">Hand of tool</span>
<span class="t" style="left:632.50px;top:196.99px;font-size:6.30px;line-height:7.56px;color:#1e1e1e;transform:scaleX(0.9301);">Supplier</span>
<svg style="left:286px;top:159px" width="382" height="203" viewBox="286 159 382 203"><path d="M386.3 161V182.300M431.3 161V182.300M471.4 161V182.300M511.4 161V182.300M551.0 161V182.300M592.0 161V182.300M630.0 161V182.300M386.3 196V261M431.3 196V261M471.4 196V261M511.4 196V261M551.0 196V261M592.0 196V261M630.0 196V261" stroke="#dedede" stroke-width=".7" fill="none"/><path d="M287 171.700H630M287 182.300H630M287 206.400H666" stroke="#e2e2e2" stroke-width=".7" fill="none"/></svg>
<div class="a" style="left:386.30px;top:171.90px;width:45.00px;height:10.40px;background:#fff;border:0.7px solid #9e9e9e;"></div>
<span class="t" style="left:388.20px;top:173.09px;font-size:6.30px;line-height:7.56px;color:#1e1e1e;transform:scaleX(0.7693);">C</span>
<span class="t" style="left:444.37px;top:173.09px;font-size:6.30px;line-height:7.56px;color:#1e1e1e;transform:scaleX(0.9150);">6.000 mm</span>
<span class="t" style="left:484.67px;top:173.09px;font-size:6.30px;line-height:7.56px;color:#1e1e1e;transform:scaleX(0.9150);">0.800 mm</span>
<span class="t" style="left:524.65px;top:173.09px;font-size:6.30px;line-height:7.56px;color:#1e1e1e;transform:scaleX(0.9150);">90.00 deg</span>
<div class="a" style="left:551.30px;top:171.90px;width:40.70px;height:10.40px;background:#fff;border:0.7px solid #9e9e9e;"></div>
<div class="a" style="left:592.00px;top:171.90px;width:38.30px;height:10.40px;background:#fff;border:0.7px solid #9e9e9e;"></div>
<span class="t" style="left:553.00px;top:173.09px;font-size:6.30px;line-height:7.56px;color:#1e1e1e;transform:scaleX(0.8004);">External</span>
<span class="t" style="left:594.00px;top:173.09px;font-size:6.30px;line-height:7.56px;color:#1e1e1e;transform:scaleX(0.9041);">Left</span>
<svg style="left:380px;top:172px" width="260" height="10" viewBox="380 172 260 10"><path d="M424.800 176.300L426.700 178.200L428.600 176.300M585.800 176.300L587.700 178.200L589.600 176.300M623.800 176.300L625.700 178.200L627.600 176.300" fill="none" stroke="#444" stroke-width=".7"/></svg>
<div class="a" style="left:286.80px;top:207.15px;width:379.40px;height:8.30px;background:#ebebeb;"></div>
<div class="a" style="left:286.80px;top:216.15px;width:379.40px;height:8.30px;background:#ebebeb;"></div>
<div class="a" style="left:286.80px;top:225.15px;width:379.40px;height:8.30px;background:#ebebeb;"></div>
<div class="a" style="left:286.80px;top:234.15px;width:379.40px;height:8.30px;background:#ebebeb;"></div>
<div class="a" style="left:286.80px;top:243.15px;width:379.40px;height:8.30px;background:#ebebeb;"></div>
<div class="a" style="left:286.80px;top:252.15px;width:379.40px;height:8.30px;background:#ebebeb;"></div>
<svg style="left:286px;top:206px" width="382" height="56" viewBox="286 206 382 56"><path d="M386.3 207V261M431.3 207V261M471.4 207V261M511.4 207V261M551.0 207V261M592.0 207V261M630.0 207V261" stroke="#d4d4d4" stroke-width=".7" fill="none"/></svg>
<span class="t" style="left:287.70px;top:207.89px;font-size:6.30px;line-height:7.56px;color:#1e1e1e;transform:scaleX(0.9546);">Direct Tool</span>
<span class="t" style="left:388.20px;top:207.89px;font-size:6.30px;line-height:7.56px;color:#1e1e1e;transform:scaleX(0.7693);">C</span>
<span class="t" style="left:444.37px;top:207.89px;font-size:6.30px;line-height:7.56px;color:#1e1e1e;transform:scaleX(0.9150);">2.500 mm</span>
<span class="t" style="left:484.67px;top:207.89px;font-size:6.30px;line-height:7.56px;color:#1e1e1e;transform:scaleX(0.9150);">0.200 mm</span>
<span class="t" style="left:524.65px;top:207.89px;font-size:6.30px;line-height:7.56px;color:#1e1e1e;transform:scaleX(0.9150);">90.00 deg</span>
<span class="t" style="left:552.70px;top:207.89px;font-size:6.30px;line-height:7.56px;color:#1e1e1e;transform:scaleX(0.8004);">External</span>
<span class="t" style="left:594.00px;top:207.89px;font-size:6.30px;line-height:7.56px;color:#1e1e1e;transform:scaleX(0.8703);">Right</span>
<span class="t" style="left:632.30px;top:207.89px;font-size:6.30px;line-height:7.56px;color:#1e1e1e;transform:scaleX(0.9235);">Sandvik</span>
<span class="t" style="left:287.70px;top:216.89px;font-size:6.30px;line-height:7.56px;color:#1e1e1e;transform:scaleX(0.9428);">Grooving Tool 02</span>
<span class="t" style="left:388.20px;top:216.89px;font-size:6.30px;line-height:7.56px;color:#1e1e1e;transform:scaleX(0.7693);">C</span>
<span class="t" style="left:444.37px;top:216.89px;font-size:6.30px;line-height:7.56px;color:#1e1e1e;transform:scaleX(0.9150);">2.500 mm</span>
<span class="t" style="left:484.67px;top:216.89px;font-size:6.30px;line-height:7.56px;color:#1e1e1e;transform:scaleX(0.9150);">0.200 mm</span>
<span class="t" style="left:524.65px;top:216.89px;font-size:6.30px;line-height:7.56px;color:#1e1e1e;transform:scaleX(0.9150);">90.00 deg</span>
<span class="t" style="left:552.70px;top:216.89px;font-size:6.30px;line-height:7.56px;color:#1e1e1e;transform:scaleX(0.8004);">External</span>
<span class="t" style="left:594.00px;top:216.89px;font-size:6.30px;line-height:7.56px;color:#1e1e1e;transform:scaleX(0.9041);">Left</span>
<span class="t" style="left:632.30px;top:216.89px;font-size:6.30px;line-height:7.56px;color:#1e1e1e;transform:scaleX(0.9235);">Sandvik</span>
<span class="t" style="left:287.70px;top:225.89px;font-size:6.30px;line-height:7.56px;color:#1e1e1e;transform:scaleX(0.9336);">Grooving Tool 03 (Finish)</span>
<span class="t" style="left:388.20px;top:225.89px;font-size:6.30px;line-height:7.56px;color:#1e1e1e;transform:scaleX(0.7693);">C</span>
<span class="t" style="left:444.37px;top:225.89px;font-size:6.30px;line-height:7.56px;color:#1e1e1e;transform:scaleX(0.9150);">1.500 mm</span>
<span class="t" style="left:484.67px;top:225.89px;font-size:6.30px;line-height:7.56px;color:#1e1e1e;transform:scaleX(0.9150);">0.200 mm</span>
<span class="t" style="left:524.65px;top:225.89px;font-size:6.30px;line-height:7.56px;color:#1e1e1e;transform:scaleX(0.9150);">90.00 deg</span>
<span class="t" style="left:552.70px;top:225.89px;font-size:6.30px;line-height:7.56px;color:#1e1e1e;transform:scaleX(0.8004);">External</span>
<span class="t" style="left:594.00px;top:225.89px;font-size:6.30px;line-height:7.56px;color:#1e1e1e;transform:scaleX(0.9041);">Left</span>
<span class="t" style="left:632.30px;top:225.89px;font-size:6.30px;line-height:7.56px;color:#1e1e1e;transform:scaleX(0.9235);">Sandvik</span>
<span class="t" style="left:287.70px;top:234.89px;font-size:6.30px;line-height:7.56px;color:#1e1e1e;transform:scaleX(0.9412);">Grooving Tool 04 (Direct)</span>
<span class="t" style="left:388.20px;top:234.89px;font-size:6.30px;line-height:7.56px;color:#1e1e1e;transform:scaleX(0.7693);">C</span>
<span class="t" style="left:444.37px;top:234.89px;font-size:6.30px;line-height:7.56px;color:#1e1e1e;transform:scaleX(0.9150);">2.500 mm</span>
<span class="t" style="left:484.67px;top:234.89px;font-size:6.30px;line-height:7.56px;color:#1e1e1e;transform:scaleX(0.9150);">0.200 mm</span>
<span class="t" style="left:524.65px;top:234.89px;font-size:6.30px;line-height:7.56px;color:#1e1e1e;transform:scaleX(0.9150);">90.00 deg</span>
<span class="t" style="left:552.70px;top:234.89px;font-size:6.30px;line-height:7.56px;color:#1e1e1e;transform:scaleX(0.8004);">External</span>
<span class="t" style="left:594.00px;top:234.89px;font-size:6.30px;line-height:7.56px;color:#1e1e1e;transform:scaleX(0.9041);">Left</span>
<span class="t" style="left:632.30px;top:234.89px;font-size:6.30px;line-height:7.56px;color:#1e1e1e;transform:scaleX(0.9235);">Sandvik</span>
<span class="t" style="left:287.70px;top:243.89px;font-size:6.30px;line-height:7.56px;color:#1e1e1e;transform:scaleX(0.9388);">Grooving Tool 05 (Opelist)</span>
<span class="t" style="left:388.20px;top:243.89px;font-size:6.30px;line-height:7.56px;color:#1e1e1e;transform:scaleX(0.7693);">C</span>
<span class="t" style="left:444.37px;top:243.89px;font-size:6.30px;line-height:7.56px;color:#1e1e1e;transform:scaleX(0.9150);">4.000 mm</span>
<span class="t" style="left:484.67px;top:243.89px;font-size:6.30px;line-height:7.56px;color:#1e1e1e;transform:scaleX(0.9150);">0.400 mm</span>
<span class="t" style="left:524.65px;top:243.89px;font-size:6.30px;line-height:7.56px;color:#1e1e1e;transform:scaleX(0.9150);">90.00 deg</span>
<span class="t" style="left:552.70px;top:243.89px;font-size:6.30px;line-height:7.56px;color:#1e1e1e;transform:scaleX(0.8004);">External</span>
<span class="t" style="left:594.00px;top:243.89px;font-size:6.30px;line-height:7.56px;color:#1e1e1e;transform:scaleX(0.9041);">Left</span>
<span class="t" style="left:632.30px;top:243.89px;font-size:6.30px;line-height:7.56px;color:#1e1e1e;transform:scaleX(0.9235);">Sandvik</span>
<span class="t" style="left:287.70px;top:252.89px;font-size:6.30px;line-height:7.56px;color:#1e1e1e;transform:scaleX(0.8796);">MS LF123D15-1616B</span>
<span class="t" style="left:388.20px;top:252.89px;font-size:6.30px;line-height:7.56px;color:#1e1e1e;transform:scaleX(0.7693);">C</span>
<span class="t" style="left:444.37px;top:252.89px;font-size:6.30px;line-height:7.56px;color:#1e1e1e;transform:scaleX(0.9150);">1.500 mm</span>
<span class="t" style="left:484.67px;top:252.89px;font-size:6.30px;line-height:7.56px;color:#1e1e1e;transform:scaleX(0.9150);">0.200 mm</span>
<span class="t" style="left:524.65px;top:252.89px;font-size:6.30px;line-height:7.56px;color:#1e1e1e;transform:scaleX(0.9150);">90.00 deg</span>
<span class="t" style="left:552.70px;top:252.89px;font-size:6.30px;line-height:7.56px;color:#1e1e1e;transform:scaleX(0.8004);">External</span>
<span class="t" style="left:594.00px;top:252.89px;font-size:6.30px;line-height:7.56px;color:#1e1e1e;transform:scaleX(0.9041);">Left</span>
<span class="t" style="left:632.30px;top:252.89px;font-size:6.30px;line-height:7.56px;color:#1e1e1e;transform:scaleX(0.9235);">Sandvik</span>
<svg style="left:380px;top:206px" width="260" height="56" viewBox="380 206 260 56"><path d="M424.8 211.1L426.7 213.0L428.6 211.1M585.8 211.1L587.7 213.0L589.6 211.1M623.8 211.1L625.700 213.0L627.6 211.1M424.8 220.1L426.7 222.0L428.6 220.1M585.8 220.1L587.7 222.0L589.6 220.1M623.8 220.1L625.700 222.0L627.6 220.1M424.8 229.1L426.7 231.0L428.6 229.1M585.8 229.1L587.7 231.0L589.6 229.1M623.8 229.1L625.700 231.0L627.6 229.1M424.8 238.1L426.7 240.0L428.6 238.1M585.8 238.1L587.7 240.0L589.6 238.1M623.8 238.1L625.700 240.0L627.6 238.1M424.8 247.1L426.7 249.0L428.6 247.1M585.8 247.1L587.7 249.0L589.6 247.1M623.8 247.1L625.700 249.0L627.6 247.1M424.8 256.1L426.7 258.0L428.6 256.1M585.8 256.1L587.7 258.0L589.6 256.1M623.8 256.1L625.700 258.0L627.6 256.1" fill="none" stroke="#9a9a9a" stroke-width=".6"/></svg>
<div class="a" style="left:286.80px;top:352.60px;width:379.40px;height:7.70px;background:#f0f0f0;"></div>
<div class="a" style="left:296.50px;top:353.20px;width:178.00px;height:6.80px;background:#cdcdcd;"></div>
<svg style="left:286px;top:352px" width="382" height="9" viewBox="286 352 382 9"><path d="M292 354.500L290 356.500L292 358.500M660.300 354.500L662.300 356.500L660.300 358.500" fill="none" stroke="#333" stroke-width=".8"/></svg>
<div class="a" style="left:146.00px;top:364.70px;width:49.50px;height:48.60px;background:#e1e1e1;border:0.7px solid #cfcfcf;"></div>
<svg style="left:160px;top:375px" width="22" height="28" viewBox="160 375 22 28">
<path d="M165.500 377H171V391.500L167 393.500H163.500V386.500L165.500 385Z" fill="#1c1c1c"/><path d="M171 377H177V396.500L172.500 399V391Z" fill="#a2a2a2"/><path d="M171 377H172.500V399L171 391.500Z" fill="#6a6a6a"/>
<path d="M170.500 392L172.300 391L171.700 399L170 400Z" fill="#f0c020"/></svg>
<span class="t" style="left:199.70px;top:364.53px;font-size:6.40px;line-height:7.68px;color:#1e1e1e;transform:scaleX(0.9366);">Filter the list of tools</span>
<div class="a" style="left:254.50px;top:368.30px;width:365.50px;height:0.70px;background:#d8d8d8;"></div>
<span class="t" style="left:622.70px;top:364.33px;font-size:6.40px;line-height:7.68px;color:#1e1e1e;transform:scaleX(0.9401);">Unit</span>
<div class="a" style="left:635.50px;top:368.30px;width:30.50px;height:0.70px;background:#d8d8d8;"></div>
<div class="a" style="left:627.40px;top:374.50px;width:34.30px;height:10.20px;background:#e1e1e1;border:0.7px solid #adadad;"></div>
<span class="t" style="left:629.20px;top:375.83px;font-size:6.40px;line-height:7.68px;color:#1e1e1e;transform:scaleX(0.9815);">Metric</span>
<svg style="left:650px;top:376px" width="12" height="8" viewBox="650 376 12 8"><path d="M654.800 379L656.700 380.900L658.600 379" fill="none" stroke="#444" stroke-width=".7"/></svg>
<div class="a" style="left:217.20px;top:382.20px;width:376.60px;height:74.20px;background:#fff;border:0.8px solid #9a9a9a;"></div>
<div class="a" style="left:201.00px;top:383.30px;width:13.40px;height:12.50px;background:#e4e4e4;border:0.7px solid #b4b4b4;"></div>
<div class="a" style="left:201.00px;top:407.00px;width:13.40px;height:13.00px;background:#cfcfcf;border:0.7px solid #c4c4c4;"></div>
<div class="a" style="left:201.00px;top:437.60px;width:13.60px;height:12.60px;background:#e4e4e4;border:0.7px solid #b4b4b4;"></div>
<svg style="left:200px;top:382px" width="16" height="70" viewBox="200 382 16 70">
<path d="M205 385V392M201.800 388.500H208.200" stroke="#109040" stroke-width="1.700"/><path d="M207.500 389.500H213L211 392V394.500L209.500 394V392Z" fill="#3858c8"/>
<path d="M202.500 409.500L207.500 415M207.500 409.500L202.500 415" stroke="#9a9a9a" stroke-width="1.400"/><path d="M207.500 413.500H213L211 416V418.500L209.500 418V416Z" fill="#9a9a9a"/>
<path d="M202.500 440L208 446M208 440L202.500 446" stroke="#e01818" stroke-width="1.600"/><circle cx="209.800" cy="446.200" r="2.500" fill="#f0d020" stroke="#a08000" stroke-width=".4"/><circle cx="209.800" cy="446.200" r=".9" fill="#3858c8"/><path d="M211.500 448.800H213.500L212.500 450Z" fill="#222"/>
</svg>
<div class="a" style="left:596.30px;top:383.30px;width:13.50px;height:12.50px;background:#d4e6f8;border:0.9px solid #3a88e0;"></div>
<svg style="left:596px;top:383px" width="14" height="13" viewBox="596 383 14 13"><rect x="598.300" y="385.800" width="6.500" height="3.400" rx="1.700" fill="#109848"/><circle cx="603" cy="387.500" r="1.100" fill="#e8ffe8"/><path d="M602.800 389.800H608.300L606.300 392.300V394.800L604.800 394.300V392.300Z" fill="#3858c8"/></svg>
<div class="a" style="left:596.30px;top:432.00px;width:20.30px;height:23.50px;background:#cccccc;border:0.7px solid #c0c0c0;"></div>
<svg style="left:596px;top:432px" width="21" height="16" viewBox="596 432 21 16"><path d="M601.500 434H611.500L607.800 438.800V444L605.200 443V438.800Z" fill="#a6a6a6"/></svg>
<span class="t" style="left:598.80px;top:447.09px;font-size:6.30px;line-height:7.56px;color:#9c9c9c;transform:scaleX(0.8979);">Filters</span>
<svg style="left:595px;top:86px" width="10" height="13" viewBox="595 86 10 13"><path d="M597 88V96L598.800 94.300L600.200 97.300L601.300 96.800L600 94H602.400Z" fill="#fff" stroke="#444" stroke-width=".6" stroke-linejoin="round"/></svg>
<!-- sec_right -->
<svg style="left:660px;top:180px" width="300" height="300" viewBox="660 180 300 300">
<defs>
<linearGradient id="cylA" x1="0" y1="0" x2="0" y2="1"><stop offset="0" stop-color="#c6c6c6"/><stop offset="0.45" stop-color="#cfcfcf"/><stop offset="0.64" stop-color="#dadada"/><stop offset="0.73" stop-color="#e6e6e6"/><stop offset="0.84" stop-color="#d2d2d2"/><stop offset="1" stop-color="#c2c2c2"/></linearGradient>
<linearGradient id="cylB" x1="0" y1="0" x2="0" y2="1"><stop offset="0" stop-color="#c4c4c4"/><stop offset="0.5" stop-color="#b4b4b4"/><stop offset="1" stop-color="#a6a6a6"/></linearGradient>
<linearGradient id="cylC" x1="0" y1="0" x2="0" y2="1"><stop offset="0" stop-color="#bdbdbd"/><stop offset="0.25" stop-color="#e4e4e4"/><stop offset="0.4" stop-color="#c4c4c4"/><stop offset="1" stop-color="#a0a0a0"/></linearGradient>
<linearGradient id="ins" x1="0" y1="0" x2="1" y2="0"><stop offset="0" stop-color="#d8a000"/><stop offset="0.5" stop-color="#f2c000"/><stop offset="1" stop-color="#d09800"/></linearGradient>
</defs>
<!-- dashed frame -->
<path d="M672 190.700H872.700V432H672" fill="none" stroke="#c2c2c2" stroke-width=".8" stroke-dasharray="4.600 2.700"/>
<!-- cylinder upper (y211..279) -->
<rect x="672" y="211" width="145.700" height="68" fill="url(#cylA)"/>
<linearGradient id="hl" x1="0" y1="0" x2="1" y2="0"><stop offset="0" stop-color="#fff" stop-opacity=".75"/><stop offset="0.5" stop-color="#fff" stop-opacity=".3"/><stop offset="1" stop-color="#fff" stop-opacity="0"/></linearGradient><rect x="672" y="256.500" width="145.700" height="8" fill="url(#hl)"/><rect x="672" y="254" width="145.700" height="13" fill="url(#hl)" opacity=".5"/>
<!-- cylinder lower -->
<rect x="672" y="279" width="145.700" height="132.700" fill="url(#cylB)"/>
<!-- right end pieces -->
<path d="M817.700 211L826 222.300V400.500L817.700 411.900Z" fill="#b6b6b6"/>
<path d="M826 241H838.300L846.700 251H852.300V371.900H844L839 381.800H826Z" fill="url(#cylC)"/>
<path d="M825.700 222.300V400.500M827.600 241V381.800" stroke="#3c3c3c" stroke-width=".9" fill="none"/><path d="M838.300 241V381.800M846.300 251V371.900M851.700 251V371.900" stroke="#6a6a6a" stroke-width=".7" fill="none"/>
<path d="M817.700 211V411.700" stroke="#555" stroke-width=".7"/>
<path d="M828.300 381.800H839L844 371.900H851.700" stroke="#555" stroke-width=".6" fill="none"/>
<!-- groove fill (lighter) -->
<path d="M690.700 211V222.300H701V231H721V222.300H731V211ZM751 211V222.300H761.700V231H781.700V222.300H791.700V211Z" fill="#cbcbcb"/>
<!-- profile -->
<path d="M672 211H690.700M731 211H751M791.700 211H817.700L826 222.300H811.700V241H838.300L846.700 251H852.300V279H831.700V275.700H811.700V279H672" fill="none" stroke="#2222c0" stroke-width="1.100" stroke-linejoin="round"/>
<path d="M690.700 211V222.300H701V231H721V222.300H731V211M751 211V222.300H761.700V231H781.700V222.300H791.700V211" fill="none" stroke="#8a3c98" stroke-width="1" stroke-linejoin="round"/>
<!-- yellow insert -->
<rect x="672" y="290.300" width="20.200" height="64.100" rx="1.500" fill="#d9a500"/>
<rect x="675.800" y="291" width="3.400" height="26" fill="#e7b400"/><rect x="681.600" y="291" width="4.600" height="27" fill="#e2ae00"/>
<path d="M687 290.800H691Q692.200 290.800 692.200 292V351L687 329Z" fill="#b98b00"/>
<path d="M672 319.500L679.500 315L686.300 319.500V325H672Z" fill="#c79500"/>
<path d="M673.300 324.500H686.300L692 350.500Q692 354.400 688.500 354.400H672V331Z" fill="#f9c90f"/>
<path d="M679 329.500L683.800 337L679 345L674.200 337Z" fill="#d19d00"/>
<path d="M672 341.500L679 346L686 341.500L690.500 354.400H672Z" fill="#e5ae00"/><path d="M676 354.400L679 346.500L683 354.400Z" fill="#f2c008"/>
<!-- origin marker -->
<circle cx="851" cy="312.300" r="4.700" fill="#fff"/><path d="M851 312.300V307.600A4.700 4.700 0 0 0 846.300 312.300ZM851 312.300V317A4.700 4.700 0 0 0 855.700 312.300Z" fill="#3a4cb8"/>
<!-- scale -->
<path d="M947 383.500H949.400V424H947" fill="none" stroke="#222" stroke-width="1.500"/><path d="M947.800 393.500H949.600M947.800 403.700H949.600M947.800 413.800H949.600" stroke="#222" stroke-width=".5"/>
<!-- axes -->
<path d="M908.500 449V474.500" stroke="#a80c0c" stroke-width="2.500"/><path d="M903 449.700L908.800 438.800L914.800 449.700Z" fill="#c00c0c"/>
<path d="M907.300 474H934" stroke="#0606a0" stroke-width="2.500"/><path d="M933 468.500L945 474L933 479.500Z" fill="#0808a8"/>
<path d="M904.800 428L911.600 433.500M911.600 428L904.800 433.500" stroke="#d01414" stroke-width="1.400"/>
<path d="M948 471.500H954L948 477H954.500" stroke="#2020c0" stroke-width="1.200" fill="none"/>
</svg>
<span class="t" style="left:928.30px;top:424.72px;font-size:6.10px;line-height:7.32px;color:#222;transform:scaleX(1.1264);">10 mm</span>
<div class="a" style="left:936.70px;top:25.00px;width:15.60px;height:15.00px;background:#e8981c;"></div>
<svg style="left:850px;top:24px" width="110" height="40" viewBox="850 24 110 40">
<!-- refresh green -->
<path d="M853.800 33.800A4.600 4.600 0 0 1 861 29.300" fill="none" stroke="#18b828" stroke-width="2.200"/><path d="M859.300 26.300L863.800 29.600L858.800 32.400Z" fill="#18b828"/>
<path d="M862.800 31.600A4.600 4.600 0 0 1 855.600 36.100" fill="none" stroke="#18b828" stroke-width="2.200"/><path d="M857.300 39.100L852.800 35.800L857.800 33Z" fill="#18b828"/>
<!-- hand/pointer -->
<path d="M868.800 30Q869 28.800 871 28.800H877V29.800H881.500V32H877L876 33.200H874.200L873.500 36.800H870.800L869.500 34.500Z" fill="#222"/><path d="M871.600 30.500V34.500M873.200 30.500V33.500" stroke="#fff" stroke-width=".5"/>
<!-- undo -->
<path d="M886 31.500L891 27.500V30Q897 30.500 896.500 38Q894.500 33.500 891 33.500V36Z" fill="#222"/>
<!-- redo (gray) -->
<path d="M914.500 31.500L909.500 27.500V30Q903.500 30.500 904 38Q906 33.500 909.500 33.500V36Z" fill="#9a9a9a"/>
<!-- zoom -->
<circle cx="924" cy="31" r="3.800" fill="none" stroke="#222" stroke-width="1.200"/><path d="M926.800 33.800L931.300 38.300" stroke="#222" stroke-width="1.700"/>
<!-- glasses -->
<path d="M938.200 32.600Q938.200 31.600 939.200 31.600H943Q944 31.600 944 32.600V34.300Q944 36.600 941.100 36.600Q938.200 36.600 938.200 34.300ZM945.200 32.600Q945.200 31.600 946.200 31.600H950Q951 31.600 951 32.600V34.300Q951 36.600 948.100 36.600Q945.200 36.600 945.200 34.300Z" fill="#a86c14" stroke="#4a2c08" stroke-width="1"/><path d="M938 31.800H951.200" stroke="#4a2c08" stroke-width="1"/><path d="M939.300 30.600L941 28.300L942.300 30.200M947 30.200L948.300 28.300L950 30.600" stroke="#5a3808" stroke-width=".7" fill="none"/>
<!-- row 2 -->
<path d="M870.300 47.500L873 46.300L875 47.800L877.500 46.500L879 48.500L878 51L879.300 53.500L876.500 54.500L874 53.500L871.500 54.500L870 52L871.300 50Z" fill="#2a2a2a"/><path d="M872.500 49.500L874 48.500M875.500 50.500L877 49.500" stroke="#ddd" stroke-width=".7"/><path d="M875 49.500L880.300 56.300" stroke="#444" stroke-width="1.500"/><ellipse cx="873.500" cy="56" rx="3.500" ry="1" fill="none" stroke="#444" stroke-width=".6"/>
<path d="M885.300 53.200L892.300 45.300L896.300 49L889.300 57H887.300Z" fill="#1e1e1e"/><path d="M892.200 46L895.600 49.100L892.800 52.300L889.400 49.200Z" fill="#fff"/>
<rect x="905.200" y="51.300" width="7.600" height="6" fill="#222"/><rect x="905.200" y="52.800" width="7.600" height="1.100" fill="#8a8a8a"/><path d="M904 49.200H914" stroke="#222" stroke-width="1.300"/><path d="M910 48L915.500 45.500M911 50L915 49" stroke="#222" stroke-width=".7"/>
<circle cx="924" cy="50" r="3.800" fill="none" stroke="#222" stroke-width="1.200"/><path d="M926.800 52.800L931.300 57.300" stroke="#222" stroke-width="1.700"/><path d="M922.500 48.500H925.500V51.500H922.500Z" fill="none" stroke="#222" stroke-width=".5"/>
<path d="M938.300 51.800Q944.500 45.600 950.700 51.800Q944.500 57.600 938.300 51.800Z" fill="none" stroke="#222" stroke-width="1.300"/><circle cx="944.500" cy="51.700" r="2" fill="#333"/><circle cx="944.500" cy="51.700" r=".7" fill="#ddd"/><path d="M940.500 47.200Q944 45.600 947 46.800M941.500 56.800Q945 58.300 949 56.300" stroke="#222" stroke-width=".8" fill="none"/><path d="M947 45.800L948.500 47.300L946.300 47.600ZM949.500 57.300L947.800 55.800L950 55.500Z" fill="#222"/>
</svg>
<div class="a" style="left:947.30px;top:78.30px;width:12.70px;height:14.40px;background:#e0e0e0;"></div>
<div class="a" style="left:947.30px;top:113.30px;width:12.70px;height:60.70px;background:#e0e0e0;"></div>
<svg style="left:946px;top:78px" width="14" height="98" viewBox="946 78 14 98">
<path d="M950 81.500H958.500L955.300 85.500V89.500L953.200 88.500V85.500Z" fill="#3858c8"/>
<path d="M954.300 115.300L950.700 118.300L954.300 121.300" fill="none" stroke="#18a028" stroke-width="1.400"/>
<path d="M950.500 130H957V127.500H952" fill="none" stroke="#222" stroke-width="1"/>
<path d="M954.300 135.800L950.700 138.800L954.300 141.800" fill="none" stroke="#3848c8" stroke-width="1.400"/>
<path d="M951 146.500H955.500V152H951Z" fill="#333"/><path d="M952 146.500L954 145.500L956.500 147V151L955.500 152" fill="#7888c8"/>
<path d="M954.300 156.200L950.700 159.200L954.300 162.200" fill="none" stroke="#3848c8" stroke-width="1.400"/>
<path d="M951.500 166H956V170.500H951.500Z" fill="#6a78c8"/><path d="M954.500 169H956.500V172H954.500Z" fill="#c8c020"/>
</svg>
<!-- sec_status -->
<div class="a" style="left:0.00px;top:524.00px;width:960.00px;height:16.00px;background:#f0f0f0;"></div>
<span class="t" style="left:3.00px;top:528.83px;font-size:6.40px;line-height:7.68px;color:#111;transform:scaleX(0.9013);">Tools Library</span>
<span class="t" style="left:594.60px;top:528.45px;font-size:6.70px;line-height:8.04px;color:#111;transform:scaleX(0.8594);">Z = -40.440 mm</span>
<span class="t" style="left:652.40px;top:528.45px;font-size:6.70px;line-height:8.04px;color:#111;transform:scaleX(0.8542);">D= -33.180 mm</span>
<div class="a" style="left:592.10px;top:526.00px;width:0.70px;height:13.00px;background:#dadada;"></div>
<div class="a" style="left:650.40px;top:526.00px;width:0.70px;height:13.00px;background:#dadada;"></div>
<div class="a" style="left:707.70px;top:526.00px;width:0.70px;height:13.00px;background:#dadada;"></div>
<div class="a" style="left:711.80px;top:527.80px;width:8.80px;height:9.80px;background:#cfd4e6;border:0.6px solid #a8aec8;"></div>
<div class="a" style="left:725.20px;top:529.00px;width:6.80px;height:7.30px;background:#fff;border:1px solid #4a4a4a;"></div>
<div class="a" style="left:812.30px;top:529.00px;width:6.80px;height:7.30px;background:#fff;border:1px solid #4a4a4a;"></div>
<div class="a" style="left:842.50px;top:529.00px;width:6.80px;height:7.30px;background:#fff;border:1px solid #4a4a4a;"></div>
<div class="a" style="left:734.40px;top:527.20px;width:75.20px;height:10.80px;background:#e4e4e4;border:0.7px solid #adadad;"></div>
<span class="t" style="left:746.60px;top:528.51px;font-size:6.60px;line-height:7.92px;color:#111;transform:scaleX(0.8269);">#2 : REVOLUTION</span>
<div class="a" style="left:822.30px;top:527.20px;width:17.10px;height:10.80px;background:#e4e4e4;border:0.7px solid #adadad;"></div>
<div class="a" style="left:823.80px;top:528.60px;width:8.80px;height:8.00px;background:#10e010;"></div>
<div class="a" style="left:852.40px;top:527.20px;width:74.90px;height:10.80px;background:#e4e4e4;border:0.7px solid #adadad;"></div>
<span class="t" style="left:864.00px;top:528.51px;font-size:6.60px;line-height:7.92px;color:#111;transform:scaleX(0.8072);">LAYER :1</span>
<div class="a" style="left:930.30px;top:527.50px;width:10.10px;height:10.30px;background:#e4e4e4;border:0.6px solid #c0c0c0;"></div>
<div class="a" style="left:944.20px;top:527.50px;width:13.80px;height:10.30px;background:#cfcfcf;border:0.6px solid #c4c4c4;"></div>
<svg style="left:700px;top:524px" width="260" height="16" viewBox="700 524 260 16">
<path d="M713.500 529.500H719M713.500 532.500H719M713.500 535.500H719M715 528.500V537M717.500 528.500V537" stroke="#7880a8" stroke-width=".5"/><path d="M717.500 535.800H720L718.750 537.200Z" fill="#222"/>
<path d="M737.800 529.600L744.800 531.200L741.300 532.600L744.800 534.200L737.800 535.600Z" fill="#2a2a90"/><path d="M737.300 528.800V537.200" stroke="#222" stroke-width=".9"/>
<path d="M803 531.700L804.900 533.600L806.800 531.700M919.500 531.700L921.400 533.600L923.300 531.700" fill="none" stroke="#444" stroke-width=".7"/>
<path d="M834.300 532H837.700L836 534Z" fill="#111"/>
<path d="M856.500 532.500L860 530.500L863.500 532.500L860 534.500Z" fill="#333"/><path d="M856.500 534L860 536L863.500 534" fill="none" stroke="#555" stroke-width=".7"/>
<path d="M932.500 530.500L935.300 529L938 530.500V534L935.300 535.500L932.500 534Z" fill="none" stroke="#4858a8" stroke-width=".7"/><path d="M932.500 530.500L935.300 532L938 530.500M935.300 532V535.500" stroke="#4858a8" stroke-width=".5" fill="none"/><circle cx="937.500" cy="535.500" r="1.400" fill="none" stroke="#333" stroke-width=".6"/>
<circle cx="951" cy="532.700" r="3.400" fill="#b4b4b4"/><path d="M949.800 531.500Q951 530 952.200 531.500Q952.200 532.500 951 533.200V534" fill="none" stroke="#e8e8e8" stroke-width=".8"/>
</svg>
<!-- sec_play -->
<svg style="left:380px;top:170px" width="200" height="200" viewBox="380 170 200 200">
<ellipse cx="479.950" cy="269.950" rx="93.650" ry="87.850" fill="none" stroke="#08f6f6" stroke-width="2.500"/>
<path d="M443.300 226.700V313.300L533.300 270Z" fill="#00ffff"/>
</svg>
</div></body></html>
